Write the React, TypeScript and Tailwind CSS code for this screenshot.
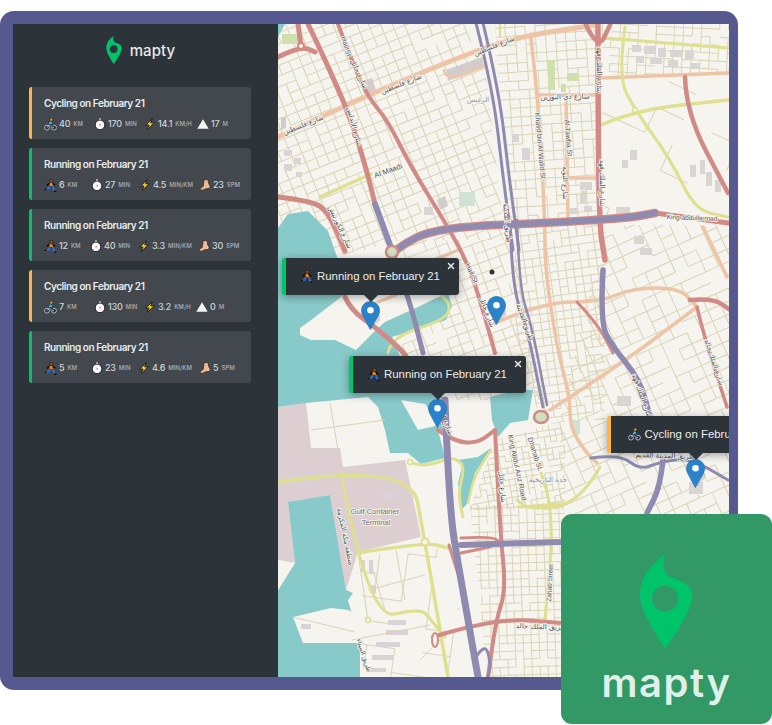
import { X } from "lucide-react";

type Pt = [number, number];

const ui = "font-['Inter','Noto_Sans',sans-serif]";

// ---------- small emoji-like icons ----------
const Bike = () => (
  <svg viewBox="0 0 14 14" className="h-[13px] w-[13px] shrink-0">
    <circle cx="3.2" cy="10.4" r="2.6" fill="#2a2e32" stroke="#c9ced2" strokeWidth=".9" />
    <circle cx="10.8" cy="10.4" r="2.6" fill="#2a2e32" stroke="#c9ced2" strokeWidth=".9" />
    <path d="M3.2 10.4 6 7l3 3.4h1.800" fill="none" stroke="#e0e4e6" strokeWidth=".8" />
    <path d="M4.6 6.800 6.600 2.800l2.800 2.400-1.800 2.600z" fill="#45c0e6" stroke="#0c0e10" strokeWidth=".5" />
    <path d="M6.200 7 9 7.400l-.6 2.600" fill="none" stroke="#1f3f7a" strokeWidth="1.300" />
    <circle cx="7.800" cy="1.800" r="1.600" fill="#f0a81e" stroke="#0c0e10" strokeWidth=".5" />
  </svg>
);

const Runner = () => (
  <svg viewBox="0 0 14 14" className="h-[13px] w-[13px] shrink-0">
    <circle cx="8" cy="2" r="1.800" fill="#8a5a2e" stroke="#0c0e10" strokeWidth=".6" />
    <path d="M5 4.400 9.500 3.700l1 3.700-4.100.8z" fill="#ff8a1c" stroke="#0c0e10" strokeWidth=".5" />
    <path d="M9.200 4.600 12 6.600M5.600 4.600 3 7" stroke="#0c0e10" strokeWidth="1.600" fill="none" />
    <path d="M6.600 8 4.600 10.600 2 11M9.600 7.600l.8 3 1.400 2.400" stroke="#2a6fe8" strokeWidth="2" fill="none" />
    <path d="M.8 11.200h2.400M10.800 13.200h2.400" stroke="#0c0e10" strokeWidth="1.400" />
  </svg>
);

const Watch = () => (
  <svg viewBox="0 0 14 14" className="h-[12px] w-[12px] shrink-0">
    <path d="M5.800.6h2.400v1.600H5.800z" fill="#e8e8e8" />
    <circle cx="7" cy="8" r="5.600" fill="#f8f8f8" stroke="#111" strokeWidth="1" />
    <path d="M6.600 6.200 8.400 8 6.600 9.400z" fill="#d0606a" />
  </svg>
);

const Bolt = () => (
  <svg viewBox="0 0 14 14" className="h-[12px] w-[12px] shrink-0">
    <path d="M9.600.8 2 8.200h3.800L3.600 13.400 12 5.600H7.800z" fill="#f8c513" stroke="#17191b" strokeWidth="1" strokeLinejoin="round" />
  </svg>
);

const Foot = () => (
  <svg viewBox="0 0 14 14" className="h-[12px] w-[12px] shrink-0">
    <path d="M6 .8h4.600l.6 4.400 1.800 3.200-.8 2.600-4.400.4-3.600 1.600-3-.4.4-1.600 3.400-2.400z" fill="#f0bb92" stroke="#3d2e25" strokeWidth=".9" strokeLinejoin="round" />
  </svg>
);

const Peak = () => (
  <svg viewBox="0 0 14 14" className="h-[12px] w-[12px] shrink-0">
    <path d="M7 1.400 13.600 12.600H.4z" fill="#f4f5f6" />
  </svg>
);

const Pin = ({ className }: { className: string }) => (
  <svg viewBox="0 0 156 282" className={className}>
    <path fillRule="evenodd" fill="currentColor" d="M73 0C38 25 0 65 0 120 0 165 48 240 76 282 108 235 156 165 156 120 156 80 108 75 88 65 70 55 68 30 73 0ZM75 92a39 39 0 1 1 0 78 39 39 0 1 1 0-78Z" />
  </svg>
);

// ---------- sidebar ----------
const workouts = [
  { title: "Cycling on February 21", bar: "bg-[#ffb545]", cols: "grid-cols-[50px_50px_53px_auto]", stats: [[<Bike />, "40", "km"], [<Watch />, "170", "min"], [<Bolt />, "14.1", "km/h"], [<Peak />, "17", "m"]] },
  { title: "Running on February 21", bar: "bg-[#00c46a]", cols: "grid-cols-[47px_48px_60px_auto]", stats: [[<Runner />, "6", "km"], [<Watch />, "27", "min"], [<Bolt />, "4.5", "min/km"], [<Foot />, "23", "spm"]] },
  { title: "Running on February 21", bar: "bg-[#00c46a]", cols: "grid-cols-[46px_48px_60px_auto]", stats: [[<Runner />, "12", "km"], [<Watch />, "40", "min"], [<Bolt />, "3.3", "min/km"], [<Foot />, "30", "spm"]] },
  { title: "Cycling on February 21", bar: "bg-[#ffb545]", cols: "grid-cols-[50px_50px_52px_auto]", stats: [[<Bike />, "7", "km"], [<Watch />, "130", "min"], [<Bolt />, "3.2", "km/h"], [<Peak />, "0", "m"]] },
  { title: "Running on February 21", bar: "bg-[#00c46a]", cols: "grid-cols-[47px_47px_61px_auto]", stats: [[<Runner />, "5", "km"], [<Watch />, "23", "min"], [<Bolt />, "4.6", "min/km"], [<Foot />, "5", "spm"]] },
] as const;

const Sidebar = () => (
  <aside className={`flex w-[265px] shrink-0 flex-col bg-[#2d3439] pl-[16px] pr-[27px] pt-[12px] ${ui}`}>
    <div className="mb-[23px] flex h-[28px] items-center justify-center gap-[8px] pl-[1px]">
      <Pin className="h-[28px] w-[16px] text-[#00c46a]" />
      <span className="text-[15px] font-medium leading-none tracking-[0.1px] text-[#e6e9ea]">mapty</span>
    </div>
    <ul className="flex flex-col gap-[9.5px]">
      {workouts.map((w, i) => (
        <li key={i} className="relative h-[51.5px] overflow-hidden rounded-[3px] bg-[#42484d] pl-[15px] pt-[10px]">
          <span className={`absolute bottom-0 left-0 top-0 w-[3px] ${w.bar}`} />
          <h2 className="text-[10px] font-semibold leading-[13px] tracking-[-0.45px] text-[#e8ecee]">{w.title}</h2>
          <div className={`mt-[8px] grid ${w.cols}`}>
            {w.stats.map((s, j) => (
              <div key={j} className="flex h-[12px] items-center">
                {s[0]}
                <span className="ml-[2px] text-[9px] font-medium leading-[12px] tracking-[-0.2px] text-[#ced6d9]">{s[1]}</span>
                <span className="ml-[3px] text-[6px] font-semibold uppercase leading-[12px] text-[#a0a5a8]">{s[2]}</span>
              </div>
            ))}
          </div>
        </li>
      ))}
    </ul>
  </aside>
);

// ---------- map drawing ----------
const pts = (p: Pt[]) => p.map((q) => q.join(",")).join(" ");

// rounds the corners of a road through midpoints
const smooth = (p: Pt[]) => {
  let d = `M${p[0][0]} ${p[0][1]}`;
  for (let i = 1; i < p.length - 1; i++) {
    const mx = (p[i][0] + p[i + 1][0]) / 2;
    const my = (p[i][1] + p[i + 1][1]) / 2;
    d += `Q${p[i][0]} ${p[i][1]} ${mx} ${my}`;
  }
  const last = p[p.length - 1];
  return `${d}L${last[0]} ${last[1]}`;
};

let seed = 7;
const rnd = () => {
  seed = (seed * 16807) % 2147483647;
  return seed / 2147483647;
};

const gridPath = (poly: Pt[], angle: number, dx: number, dy: number, drop: number) => {
  const xs = poly.map((p) => p[0]);
  const ys = poly.map((p) => p[1]);
  const cx = (Math.min(...xs) + Math.max(...xs)) / 2;
  const cy = (Math.min(...ys) + Math.max(...ys)) / 2;
  const r = Math.max(Math.max(...xs) - Math.min(...xs), Math.max(...ys) - Math.min(...ys));
  let d = "";
  for (let x = -r; x < r; x += dx) {
    for (let y = -r; y < r; y += dy) {
      if (rnd() > drop) d += `M${(cx + x).toFixed(1)} ${(cy + y).toFixed(1)}v${dy}`;
      if (rnd() > drop) d += `M${(cx + x).toFixed(1)} ${(cy + y).toFixed(1)}h${dx}`;
    }
  }
  return { d, transform: `rotate(${angle} ${cx} ${cy})` };
};

const regions: { poly: Pt[]; a: number; dx: number; dy: number; drop: number }[] = [
  { poly: [[278, 24], [480, 24], [505, 240], [400, 240], [345, 255], [278, 255]], a: -22, dx: 11, dy: 10, drop: 0.12 },
  { poly: [[495, 24], [600, 24], [600, 220], [510, 220]], a: -4, dx: 10, dy: 9, drop: 0.15 },
  { poly: [[602, 24], [729, 24], [729, 75], [602, 75]], a: 3, dx: 9, dy: 8, drop: 0.22 },
  { poly: [[602, 75], [729, 75], [729, 220], [602, 220]], a: 25, dx: 30, dy: 28, drop: 0.78 },
  { poly: [[515, 225], [605, 225], [605, 420], [540, 420], [515, 330]], a: -8, dx: 8, dy: 8, drop: 0.15 },
  { poly: [[605, 225], [729, 225], [729, 520], [560, 520], [560, 420]], a: -24, dx: 14, dy: 12, drop: 0.25 },
  { poly: [[400, 240], [512, 240], [540, 400], [400, 400]], a: -20, dx: 11, dy: 10, drop: 0.22 },
  { poly: [[495, 440], [565, 420], [565, 510], [470, 510]], a: -10, dx: 6, dy: 6, drop: 0.25 },
  { poly: [[470, 505], [565, 505], [565, 677], [488, 677]], a: -2, dx: 8, dy: 8, drop: 0.12 },
];

const grids = regions.map((r) => ({ ...r, ...gridPath(r.poly, r.a, r.dx, r.dy, r.drop) }));
const southPoly: Pt[] = [[362, 556], [448, 548], [472, 677], [362, 677]];
const southGrid = gridPath(southPoly, 8, 28, 24, 0.45);

const water: Pt[][] = [
  [[278, 24], [285, 24], [278, 37]],
  [[278, 228], [288, 214], [308, 211], [328, 231], [335, 251], [345, 280], [430, 300], [448, 294], [452, 306], [446, 320], [392, 337], [400, 356], [442, 394], [446, 430], [438, 430], [445, 458], [421, 464], [408, 453], [390, 453], [385, 430], [378, 407], [368, 397], [306, 403], [278, 407]],
  [[458, 460], [478, 457], [491, 448], [475, 473], [468, 503], [461, 510], [458, 483], [463, 463]],
  [[490, 397], [520, 390], [533, 390], [528, 420], [510, 423], [498, 437], [492, 420]],
  [[288, 502], [330, 495], [346, 590], [353, 593], [348, 600], [360, 643], [360, 677], [278, 677], [278, 590], [295, 563]],
];

const land: Pt[][] = [
  [[300, 328], [311, 320], [328, 307], [341, 297], [345, 290], [440, 296], [420, 306], [385, 322], [378, 328], [356, 350], [335, 340], [311, 340], [300, 335]],
  [[293, 617], [331, 608], [348, 610], [368, 620], [400, 660], [400, 677], [360, 677], [360, 643], [303, 643]],
  [[278, 560], [295, 563], [278, 590]],
  [[401, 400], [425, 404], [440, 425], [418, 430]],
];

const industrial: Pt[] = [[278, 407], [306, 403], [311, 448], [340, 448], [343, 467], [405, 460], [421, 537], [358, 552], [346, 590], [330, 495], [288, 502], [295, 563], [278, 560]];

type Road = { p: Pt[]; w?: number };

const minor: Road[] = [
  { p: [[341, 472], [358, 553], [368, 620]] },
  { p: [[370, 560], [385, 610]] }, { p: [[396, 550], [405, 600]] },
  { p: [[368, 590], [425, 575]] }, { p: [[352, 640], [430, 625]] },
  { p: [[420, 660], [440, 640]] }, { p: [[293, 617], [355, 632]] },
  { p: [[311, 430], [385, 420]] }, { p: [[330, 403], [338, 450]] },
];

const peach: Road[] = [
  { p: [[278, 137], [368, 95], [445, 63], [511, 38], [595, 25]], w: 5 },
  { p: [[531, 38], [538, 97], [545, 220], [545, 270], [558, 353], [570, 397], [570, 427], [584, 450], [597, 463]], w: 3.5 },
  { p: [[538, 95], [595, 95]], w: 3.5 }, { p: [[566, 95], [568, 217]], w: 3.5 },
  { p: [[568, 178], [595, 178]], w: 3.5 }, { p: [[601, 78], [728, 73]], w: 3.5 },
  { p: [[444, 70], [446, 82], [486, 65]], w: 2.5 },
  { p: [[490, 325], [543, 302], [600, 302], [633, 288], [680, 288], [697, 307]], w: 3.5 },
  { p: [[550, 410], [617, 367], [697, 307]], w: 3.5 },
  { p: [[703, 227], [727, 277]], w: 3.5 },
  { p: [[378, 302], [396, 295]], w: 3 }, { p: [[435, 260], [458, 250]], w: 3 },
];

const yellow: Road[] = [
  { p: [[605, 38], [728, 48]], w: 3 },
  { p: [[625, 27], [618, 77], [635, 110], [671, 160], [695, 210], [728, 217]], w: 3 },
  { p: [[601, 125], [635, 110], [728, 100]], w: 3.5 },
  { p: [[500, 23], [500, 36]], w: 2 },
  { p: [[320, 197], [371, 174]], w: 3.5 },
  { p: [[388, 353], [391, 337], [445, 320], [451, 305], [441, 295]], w: 3 },
  { p: [[278, 482], [410, 462], [425, 542], [448, 677]], w: 3.5 },
  { p: [[410, 462], [421, 467], [445, 460], [455, 458], [465, 467], [458, 493], [463, 517]], w: 3 },
  { p: [[341, 472], [368, 620], [421, 608], [431, 620], [445, 637]], w: 3 },
  { p: [[358, 553], [425, 542], [448, 548]], w: 3.5 },
  { p: [[541, 473], [555, 507], [545, 620]], w: 3 },
  { p: [[518, 507], [568, 503]], w: 2.5 },
  { p: [[491, 450], [475, 473], [468, 503]], w: 2.5 },
  { p: [[600, 467], [580, 503], [530, 510], [517, 500]], w: 3 },
];

const pink: Road[] = [
  { p: [[308, 24], [345, 101], [365, 164], [375, 204]], w: 5 },
  { p: [[338, 24], [353, 64], [368, 97], [388, 121], [411, 167], [448, 227], [468, 264], [480, 300], [495, 353]], w: 4 },
  { p: [[278, 57], [301, 46], [315, 52]], w: 5 }, { p: [[298, 24], [301, 46]], w: 5 },
  { p: [[278, 197], [311, 201], [328, 211], [345, 251]], w: 5 },
  { p: [[345, 297], [351, 310], [375, 327], [405, 353], [410, 365]], w: 5 },
  { p: [[598, 23], [598, 217], [605, 260]], w: 5.5 },
  { p: [[586, 25], [598, 50], [610, 25]], w: 4.5 },
  { p: [[685, 77], [686, 113], [728, 193]], w: 4.5 },
  { p: [[655, 213], [728, 223]], w: 5 },
  { p: [[690, 300], [713, 298], [730, 310]], w: 4.5 },
  { p: [[697, 307], [703, 333], [727, 407]], w: 3.5 },
  { p: [[577, 302], [597, 323], [613, 353]], w: 3 },
  { p: [[438, 430], [455, 442], [478, 443], [495, 430]], w: 4 },
  { p: [[495, 430], [500, 530], [506, 590], [496, 620], [488, 677]], w: 4 },
  { p: [[433, 637], [495, 618], [561, 623]], w: 4 },
  { p: [[449, 545], [452, 555], [460, 580]], w: 3 },
  { p: [[461, 538], [495, 536], [500, 545], [461, 553]], w: 3 },
];

const arterial: Pt[] = [[395, 251], [405, 243], [428, 232], [470, 226], [545, 223], [628, 218], [655, 213]];

const purple: Road[] = [
  { p: [[375, 204], [390, 245]], w: 6 },
  { p: arterial, w: 6 },
  { p: [[476, 23], [493, 90], [503, 177], [513, 250]], w: 3 },
  { p: [[483, 23], [499, 90], [509, 177], [519, 250]], w: 3 },
  { p: [[510, 220], [512, 287], [527, 327], [543, 407]], w: 3 },
  { p: [[517, 220], [519, 287], [532, 327], [547, 405]], w: 2.5 },
  { p: [[388, 240], [408, 295], [423, 353]], w: 5 },
  { p: [[603, 270], [600, 323], [613, 347], [640, 380], [650, 417]], w: 5.5 },
  { p: [[591, 458], [620, 454], [640, 470], [660, 462], [690, 458], [728, 480]], w: 3 },
  { p: [[663, 460], [660, 487], [647, 513]], w: 5.5 },
  { p: [[445, 400], [446, 430], [451, 520], [458, 563], [478, 677]], w: 7 },
  { p: [[476, 657], [485, 643], [491, 663], [488, 677]], w: 3 },
  { p: [[461, 545], [561, 542]], w: 6 },
];

const blocks: Pt[][] = [
  [[446, 70], [482, 57], [484, 67], [448, 81]],
  [[360, 82], [372, 78], [376, 90], [364, 94]],
  [[281, 118], [286, 116], [286, 128], [281, 130]],
  [[437, 200], [445, 196], [448, 206], [440, 210]],
];

const greens: [number, number, number, number, string][] = [
  [548, 60, 7, 30, "#cfe0ae"], [567, 73, 12, 8, "#cfe0ae"], [561, 84, 5, 8, "#cfe0ae"], [581, 191, 5, 9, "#cfe0ae"],
  [459, 192, 16, 14, "#cfe2d3"], [282, 34, 18, 10, "#cfe0ae"], [572, 420, 8, 14, "#cfe2d3"],
];

const greys: [number, number, number, number][] = [
  [632, 45, 9, 7], [644, 46, 11, 8], [658, 48, 8, 9], [670, 50, 12, 7], [685, 50, 9, 9], [636, 56, 8, 7], [650, 58, 12, 6], [668, 60, 10, 7], [690, 63, 9, 6],
  [690, 165, 6, 12], [700, 160, 5, 14], [706, 172, 6, 14], [715, 180, 6, 12], [622, 160, 6, 8], [630, 150, 7, 10],
  [580, 182, 12, 8], [580, 194, 6, 10], [570, 208, 8, 6], [584, 206, 8, 6], [616, 207, 14, 7], [634, 236, 10, 8], [640, 248, 12, 7],
  [424, 207, 9, 8], [512, 134, 7, 8], [522, 148, 8, 12], [535, 125, 5, 6], [689, 482, 14, 12], [617, 396, 14, 10],
  [284, 150, 8, 6], [294, 158, 7, 6], [284, 164, 8, 7], [296, 172, 6, 5],
];

const portBars: [number, number, number, number][] = [
  [383, 492, 7, 7], [394, 490, 5, 5], [306, 482, 6, 6], [318, 476, 4, 6],
  [361, 560, 4, 12], [369, 560, 4, 14], [370, 585, 6, 8], [388, 620, 18, 5], [386, 630, 22, 5], [376, 642, 24, 5], [372, 655, 22, 5], [366, 668, 20, 4], [301, 624, 10, 5],
];

type Label = { t: string; x: number; y: number; r?: number; s?: number; ar?: boolean; c?: string };

const labels: Label[] = [
  { t: "شارع فلسطين", x: 495, y: 48, r: -22, ar: true },
  { t: "شارع فلسطين", x: 402, y: 86, r: -22, ar: true },
  { t: "شارع فلسطين", x: 304, y: 127, r: -22, ar: true },
  { t: "Hail St", x: 344, y: 47, r: 73 },
  { t: "شارع حائل", x: 357, y: 75, r: 65, ar: true },
  { t: "شارع الأندلس", x: 352, y: 127, r: 75, ar: true },
  { t: "Al Maadi", x: 389, y: 173, r: -20, s: 7.5 },
  { t: "الرغبس", x: 478, y: 102, ar: true, c: "#9a9a9a" },
  { t: "شارع ذي النورين", x: 565, y: 99, r: -1, ar: true },
  { t: "Khalid bin Al Walid St.", x: 538, y: 147, r: 85 },
  { t: "Al Tawba St", x: 566, y: 138, r: 85 },
  { t: "شارع التوبة", x: 563, y: 183, r: 90, ar: true },
  { t: "شارع الملك فهد", x: 597, y: 70, r: 90, ar: true },
  { t: "شارع الملك فهد", x: 600, y: 183, r: 90, ar: true },
  { t: "King abdulla road", x: 692, y: 220, r: 2, s: 6.5 },
  { t: "شارع الكورنيش", x: 338, y: 228, r: 65, ar: true },
  { t: "طريق المدينة", x: 505, y: 223, r: 85, ar: true },
  { t: "طريق المدينة", x: 523, y: 323, r: 70, ar: true },
  { t: "Hail St.", x: 470, y: 275, r: 65 },
  { t: "شارع حائل", x: 485, y: 313, r: 70, ar: true },
  { t: "شارع الملك فهد", x: 640, y: 397, r: 70, ar: true },
  { t: "شارع الملك خالد", x: 712, y: 363, r: 72, ar: true },
  { t: "جدة التاريخية", x: 548, y: 482, ar: true, c: "#8c8c8c" },
  { t: "King Abdul Aziz Road", x: 515, y: 468, r: 78 },
  { t: "Dhahab St.", x: 533, y: 455, r: 72 },
  { t: "Zahab Street", x: 552, y: 583, r: -87, s: 6.5 },
  { t: "Gulf Container", x: 375, y: 514, s: 7.5, c: "#6b6b6b" },
  { t: "Terminal", x: 376, y: 525, s: 7.5, c: "#6b6b6b" },
  { t: "منطقة مكة المكرمة", x: 343, y: 537, r: 78, ar: true },
  { t: "طريق الملك خالد", x: 541, y: 629, r: 2, ar: true },
  { t: "شارع حائل", x: 500, y: 487, r: 85, ar: true },
  { t: "طريق الميناء", x: 362, y: 656, r: 72, ar: true, s: 6.5 },
  { t: "شارع الملك", x: 442, y: 420, r: 65, ar: true },
  { t: "طريق المدينة القديم", x: 665, y: 458, r: 2, ar: true },
];

const roadProps = { fill: "none", strokeLinejoin: "round", strokeLinecap: "round" } as const;

const MapArt = () => (
  <svg viewBox="278 24 451 653" className="absolute inset-0 h-full w-full">
    <defs>
      {grids.map((g, i) => (
        <clipPath key={i} id={`grid-${i}`}>
          <polygon points={pts(g.poly)} />
        </clipPath>
      ))}
      <clipPath id="south">
        <polygon points={pts(southPoly)} />
      </clipPath>
    </defs>
    <rect x="278" y="24" width="451" height="653" fill="#f6f4ee" />
    {grids.map((g, i) => (
      <g key={i} clipPath={`url(#grid-${i})`}>
        <path d={g.d} transform={g.transform} fill="none" stroke="#d9d4b6" strokeWidth="1" />
      </g>
    ))}
    {greens.map(([x, y, w, h, c], i) => <rect key={i} x={x} y={y} width={w} height={h} fill={c} />)}
    {greys.map(([x, y, w, h], i) => <rect key={i} x={x} y={y} width={w} height={h} fill="#d8d5d2" />)}
    {blocks.map((b, i) => <polygon key={i} points={pts(b)} fill="#d2cdcb" />)}
    <polygon points={pts(industrial)} fill="#dcced1" />
    {water.map((w, i) => <polygon key={i} points={pts(w)} fill="#88c9c9" />)}
    {land.map((l, i) => <polygon key={i} points={pts(l)} fill="#f6f4ee" />)}
    <g clipPath="url(#south)">
      <path d={southGrid.d} transform={southGrid.transform} fill="none" stroke="#d9d4b6" strokeWidth="1" />
    </g>
    {portBars.map(([x, y, w, h], i) => <rect key={i} x={x} y={y} width={w} height={h} fill="#d9d2d6" />)}
    {minor.map((r, i) => <polyline key={i} points={pts(r.p)} fill="none" stroke="#d9d4b6" strokeWidth="1" />)}
    {peach.map((r, i) => <path key={i} d={smooth(r.p)} stroke="#eec4a6" strokeWidth={r.w} {...roadProps} />)}
    {yellow.map((r, i) => <path key={i} d={smooth(r.p)} stroke="#dde08f" strokeWidth={r.w} {...roadProps} />)}
    <circle cx="410" cy="462" r="2.5" fill="#f6f4ee" stroke="#dde08f" strokeWidth="1.5" />
    <circle cx="425" cy="542" r="3.5" fill="#f6f4ee" stroke="#dde08f" strokeWidth="2" />
    <circle cx="368" cy="620" r="2.5" fill="#f6f4ee" stroke="#dde08f" strokeWidth="1.5" />
    <circle cx="635" cy="110" r="2.5" fill="#f6f4ee" stroke="#dde08f" strokeWidth="1.5" />
    {pink.map((r, i) => <path key={i} d={smooth(r.p)} stroke="#d18a85" strokeWidth={r.w} {...roadProps} />)}
    <path d={smooth(arterial)} stroke="#d18a85" strokeWidth="8.5" {...roadProps} />
    {purple.map((r, i) => <path key={i} d={smooth(r.p)} stroke="#8f8ab0" strokeWidth={r.w} {...roadProps} />)}
    <circle cx="392" cy="252" r="6" fill="#cfe0c0" stroke="#d18a85" strokeWidth="2.5" />
    <circle cx="301" cy="46" r="3" fill="#f6f4ee" stroke="#d18a85" strokeWidth="2" />
    <ellipse cx="541" cy="417" rx="7" ry="6" fill="#cfe0c0" stroke="#d18a85" strokeWidth="2.5" />
    <ellipse cx="435" cy="640" rx="3" ry="7" fill="#f6f4ee" stroke="#d18a85" strokeWidth="2" />
    <circle cx="492" cy="272" r="2.5" fill="#333" />
    {labels.map((l, i) => (
      <text
        key={i}
        x={l.x}
        y={l.y}
        transform={l.r ? `rotate(${l.r} ${l.x} ${l.y})` : undefined}
        textAnchor="middle"
        fontSize={l.s ?? 7}
        fontFamily={l.ar ? "'DejaVu Sans', sans-serif" : "'Liberation Sans', sans-serif"}
        fill={l.c ?? "#555"}
        stroke="#f6f4ee"
        strokeWidth="1.6"
        paintOrder="stroke"
      >
        {l.t}
      </text>
    ))}
  </svg>
);

// ---------- markers and popups ----------
const Marker = ({ left, top }: { left: string; top: string }) => (
  <svg viewBox="0 0 19 29" className={`absolute h-[29px] w-[19px] ${left} ${top}`}>
    <path d="M7 29 19 19 14 14 9 29Z" fill="#000" opacity=".13" transform="translate(3 -2)" />
    <path d="M9.500.5C4.500.5.500 4.400.500 9.400c0 2.300 1 4.400 2 6.400L9.300 28.600 16.600 15.800c1-2 1.900-4.100 1.900-6.400C18.500 4.400 14.500.5 9.500.5Z" fill="#2a82cb" stroke="#2673b4" strokeWidth=".7" />
    <circle cx="9.500" cy="9.300" r="3.300" fill="#fff" />
  </svg>
);

const Popup = ({ pos, bar, icon, text, close }: { pos: string; bar: string; icon: React.ReactNode; text: string; close?: boolean }) => (
  <div className={`absolute h-[37px] w-[177px] ${pos}`}>
    <div className={`relative flex h-full items-center justify-center gap-[4px] rounded-[3px] border-l-[4px] ${bar} bg-[#2d3439] pr-[5px] font-['Liberation_Sans',sans-serif] text-[11.4px] text-[#ececec] shadow-[0_2px_8px_rgba(0,0,0,0.35)]`}>
      {icon}
      <span className="whitespace-nowrap">{text}</span>
      {close && <X className="absolute right-[3px] top-[3px] h-[10px] w-[10px] text-[#e8e8e8]" strokeWidth={3.5} />}
    </div>
    <div className="absolute left-[82px] top-[37px] h-0 w-0 border-x-[7px] border-t-[7px] border-x-transparent border-t-[#2d3439]" />
  </div>
);

const AppIcon = () => (
  <div className="absolute left-[561px] top-[514px] flex h-[210px] w-[211px] flex-col items-center rounded-[11px] bg-[#329966] pt-[41px]">
    <Pin className="ml-[-1px] h-[94px] w-[52px] text-[#00c46a]" />
    <span className={`mt-[9px] text-[40px] font-semibold leading-[50px] tracking-[1.5px] text-[#dff0e8] ${ui}`}>mapty</span>
  </div>
);

export default function App() {
  return (
    <div className="relative h-[725px] w-[772px] overflow-hidden bg-white pt-[11px]">
      <div className="flex h-[679px] w-[738px] rounded-[14px] bg-[#565990] pb-[13px] pl-[13px] pr-[9px] pt-[13px]">
        <Sidebar />
        <main className="relative flex-1 overflow-hidden">
          <MapArt />
          <Marker left="left-[83px]" top="top-[277px]" />
          <Marker left="left-[209px]" top="top-[272px]" />
          <Marker left="left-[150px]" top="top-[375px]" />
          <Marker left="left-[408px]" top="top-[435px]" />
          <Popup pos="left-[4px] top-[234px]" bar="border-[#00c46a]" icon={<Runner />} text="Running on February 21" close />
          <Popup pos="left-[71px] top-[332px]" bar="border-[#00c46a]" icon={<Runner />} text="Running on February 21" close />
          <Popup pos="left-[329px] top-[392px]" bar="border-[#ffb545]" icon={<Bike />} text="Cycling on February 21" />
        </main>
      </div>
      <AppIcon />
    </div>
  );
}
